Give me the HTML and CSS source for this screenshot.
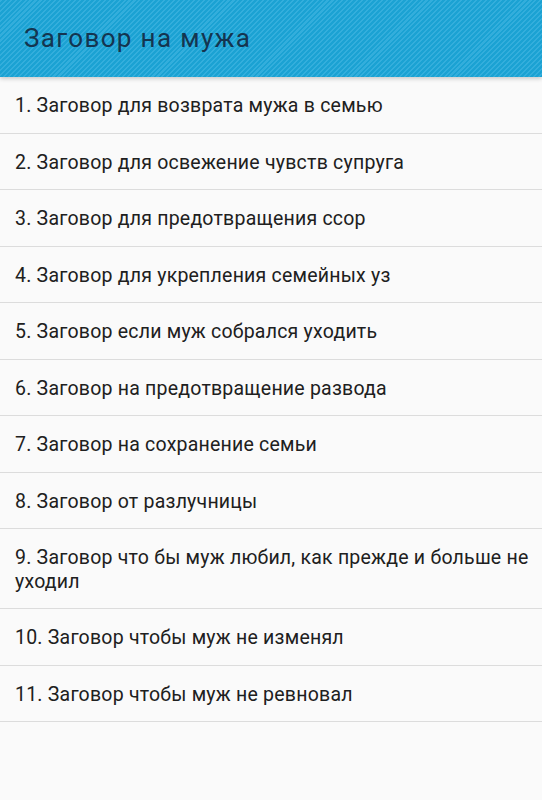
FILE: index.html
```html
<!DOCTYPE html>
<html lang="ru">
<head>
<meta charset="utf-8">
<title>Заговор на мужа</title>
<link rel="stylesheet" href="styles.css">
</head>
<body>
<header class="appbar">
  <h1 class="title">Заговор на мужа</h1>
</header>
<ul class="list">
  <li class="item">1. Заговор для возврата мужа в семью</li>
  <li class="item">2. Заговор для освежение чувств супруга</li>
  <li class="item">3. Заговор для предотвращения ссор</li>
  <li class="item">4. Заговор для укрепления семейных уз</li>
  <li class="item">5. Заговор если муж собрался уходить</li>
  <li class="item">6. Заговор на предотвращение развода</li>
  <li class="item">7. Заговор на сохранение семьи</li>
  <li class="item">8. Заговор от разлучницы</li>
  <li class="item">9. Заговор что бы муж любил, как прежде и больше не уходил</li>
  <li class="item">10. Заговор чтобы муж не изменял</li>
  <li class="item">11. Заговор чтобы муж не ревновал</li>
</ul>
</body>
</html>
```
FILE: styles.css
```css
html, body {
  margin: 0;
  padding: 0;
  background: #fafafa;
  font-family: Roboto, "Noto Sans", sans-serif;
}
body {
  width: 542px;
  height: 800px;
  overflow: hidden;
}
.appbar {
  height: 77px;
  display: flex;
  align-items: center;
  padding: 0 24px;
  background-color: #1ba2d3;
  background-image: repeating-linear-gradient(
    -45deg,
    #1ba2d3 0px,
    #1ba2d3 2px,
    #33aedc 2px,
    #33aedc 3.5px
  );
  box-shadow: 0 2px 4px rgba(0, 0, 0, 0.18);
  position: relative;
  z-index: 1;
}
.title {
  margin: 0;
  font-weight: 400;
  font-size: 26px;
  color: #143550;
  letter-spacing: 1.35px;
  padding-bottom: 2px;
}
.list {
  list-style: none;
  margin: 0;
  padding: 0;
}
.item {
  padding: 17px 4px 15px 15px;
  line-height: 23.5px;
  font-size: 19.5px;
  letter-spacing: 0.22px;
  color: #202020;
  border-bottom: 1px solid #dcdcdc;
}
```
